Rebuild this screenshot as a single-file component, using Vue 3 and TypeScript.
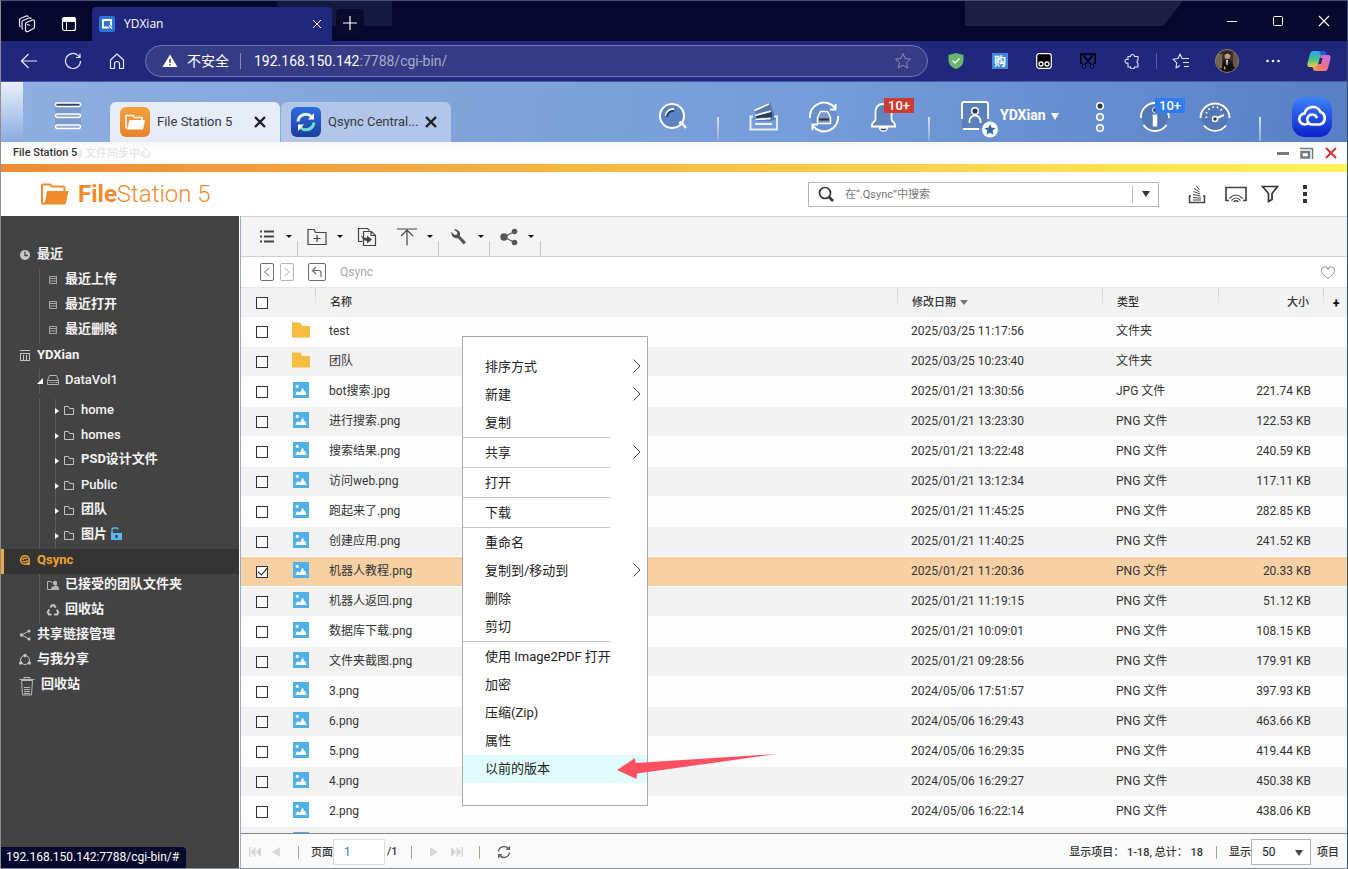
<script setup lang="ts">
import { ref } from 'vue'

interface FileRow {
  name: string
  date: string
  type: string
  size: string
  folder?: boolean
  checked?: boolean
}

interface TreeNode {
  label: string
  icon: string
  level: number
  arrow?: 'open' | 'closed'
  active?: boolean
  lock?: boolean
  gap?: boolean
  wide?: boolean
}

interface MenuItem {
  label: string
  sub?: boolean
  line?: boolean
  active?: boolean
}

const tree: TreeNode[] = [
  { label: '最近', icon: 'clock', level: 0 },
  { label: '最近上传', icon: 'list', level: 1 },
  { label: '最近打开', icon: 'list', level: 1 },
  { label: '最近删除', icon: 'list', level: 1 },
  { label: 'YDXian', icon: 'nas', level: 0 },
  { label: 'DataVol1', icon: 'disk', level: 1, arrow: 'open' },
  { label: 'home', icon: 'dir', level: 2, arrow: 'closed', gap: true },
  { label: 'homes', icon: 'dir', level: 2, arrow: 'closed' },
  { label: 'PSD设计文件', icon: 'dir', level: 2, arrow: 'closed' },
  { label: 'Public', icon: 'dir', level: 2, arrow: 'closed' },
  { label: '团队', icon: 'dir', level: 2, arrow: 'closed' },
  { label: '图片', icon: 'dir', level: 2, arrow: 'closed', lock: true },
  { label: 'Qsync', icon: 'qsync', level: 0, active: true },
  { label: '已接受的团队文件夹', icon: 'team', level: 1 },
  { label: '回收站', icon: 'recycle', level: 1 },
  { label: '共享链接管理', icon: 'link', level: 0 },
  { label: '与我分享', icon: 'circle', level: 0 },
  { label: '回收站', icon: 'trash', level: 0, wide: true },
]

// Han labels are set bold at every level; Latin ones only at the top level
const isHan = (label: string): boolean => /[\u4e00-\u9fff]/.test(label)

const files = ref<FileRow[]>([
  { name: 'test', date: '2025/03/25 11:17:56', type: '文件夹', size: '', folder: true },
  { name: '团队', date: '2025/03/25 10:23:40', type: '文件夹', size: '', folder: true },
  { name: 'bot搜索.jpg', date: '2025/01/21 13:30:56', type: 'JPG 文件', size: '221.74 KB' },
  { name: '进行搜索.png', date: '2025/01/21 13:23:30', type: 'PNG 文件', size: '122.53 KB' },
  { name: '搜索结果.png', date: '2025/01/21 13:22:48', type: 'PNG 文件', size: '240.59 KB' },
  { name: '访问web.png', date: '2025/01/21 13:12:34', type: 'PNG 文件', size: '117.11 KB' },
  { name: '跑起来了.png', date: '2025/01/21 11:45:25', type: 'PNG 文件', size: '282.85 KB' },
  { name: '创建应用.png', date: '2025/01/21 11:40:25', type: 'PNG 文件', size: '241.52 KB' },
  { name: '机器人教程.png', date: '2025/01/21 11:20:36', type: 'PNG 文件', size: '20.33 KB', checked: true },
  { name: '机器人返回.png', date: '2025/01/21 11:19:15', type: 'PNG 文件', size: '51.12 KB' },
  { name: '数据库下载.png', date: '2025/01/21 10:09:01', type: 'PNG 文件', size: '108.15 KB' },
  { name: '文件夹截图.png', date: '2025/01/21 09:28:56', type: 'PNG 文件', size: '179.91 KB' },
  { name: '3.png', date: '2024/05/06 17:51:57', type: 'PNG 文件', size: '397.93 KB' },
  { name: '6.png', date: '2024/05/06 16:29:43', type: 'PNG 文件', size: '463.66 KB' },
  { name: '5.png', date: '2024/05/06 16:29:35', type: 'PNG 文件', size: '419.44 KB' },
  { name: '4.png', date: '2024/05/06 16:29:27', type: 'PNG 文件', size: '450.38 KB' },
  { name: '2.png', date: '2024/05/06 16:22:14', type: 'PNG 文件', size: '438.06 KB' },
  { name: '', date: '', type: '', size: '' },
])

const menu: MenuItem[] = [
  { label: '排序方式', sub: true },
  { label: '新建', sub: true },
  { label: '复制', line: true },
  { label: '共享', sub: true, line: true },
  { label: '打开', line: true },
  { label: '下载', line: true },
  { label: '重命名' },
  { label: '复制到/移动到', sub: true },
  { label: '删除' },
  { label: '剪切', line: true },
  { label: '使用 Image2PDF 打开' },
  { label: '加密' },
  { label: '压缩(Zip)' },
  { label: '属性' },
  { label: '以前的版本', active: true },
]

const page = ref('1')
const perPage = ref('50')
const query = ref('')
</script>

<template>
  <div class="window">
    <svg class="defs" aria-hidden="true">
      <symbol id="clock" viewBox="0 0 16 16"><circle cx="8" cy="8" r="5" fill="#c9c9c9" /><path d="M8 4.5V8.5H11" fill="none" stroke="#434343" stroke-width="1.3" /></symbol>
      <symbol id="list" viewBox="0 0 16 16"><path d="M4.5 4.5h7v7h-7zM5 6.5h6M5 9h6" fill="none" stroke="#a6a6a6" /></symbol>
      <symbol id="nas" viewBox="0 0 16 16"><path d="M3 3.5h10M3.5 6v7M12.5 6v7M3 6.5h10M6.5 8v5M9.5 8v5M3 13.5h10" fill="none" stroke="#c4c4c4" /></symbol>
      <symbol id="disk" viewBox="0 0 16 16"><path d="M2.5 8.5l2-5h7l2 5v4h-11zM2.5 8.5h11" fill="none" stroke="#b5b5b5" stroke-linejoin="round" /><path d="M4.5 10.5h5" stroke="#b5b5b5" stroke-dasharray="1 1" /><path d="M10.5 10.5h2" stroke="#b5b5b5" /></symbol>
      <symbol id="dir" viewBox="0 0 16 16"><path d="M3.5 12.5v-8h4l1 2h4v6z" fill="none" stroke="#c4c4c4" /></symbol>
      <symbol id="qsync" viewBox="0 0 16 16"><circle cx="8" cy="8" r="4.300" fill="none" stroke="#f0a030" stroke-width="1.600" /><path d="M5.500 8q1-2.500 3.500-1.500l1.500-.5M10.500 8q-1 2.500-3.500 1.500l-1.500.5" fill="none" stroke="#f0a030" stroke-width="1.300" /><path d="M10.500 10.500h2.500V13H9z" fill="#f0a030" /></symbol>
      <symbol id="team" viewBox="0 0 16 16"><path d="M8 12.500H2.500V4.500H6l1 1.500" fill="none" stroke="#b5b5b5" /><circle cx="10" cy="6" r="2.200" fill="#b5b5b5" /><path d="M6 13c0-3 1.500-4 4-4V5h1.500v4C13.500 9 14 10.500 14 13z" fill="#b5b5b5" /></symbol>
      <symbol id="recycle" viewBox="0 0 16 16"><path d="M5.500 5.500L7 3.200h2.200l1.500 2.500M11.800 7.800l1.500 2.600-1.200 2.100H9M6.500 12.500H4L2.700 10.300 4.200 7.600" fill="none" stroke="#c4c4c4" stroke-width="2" /></symbol>
      <symbol id="link" viewBox="0 0 16 16"><path d="M12 4L4.500 8l7.500 4" fill="none" stroke="#c4c4c4" /><circle cx="12" cy="4" r="1.500" fill="#c4c4c4" /><circle cx="4.500" cy="8" r="1.700" fill="#c4c4c4" /><circle cx="12" cy="12" r="1.500" fill="#c4c4c4" /></symbol>
      <symbol id="circle" viewBox="0 0 16 16"><circle cx="8" cy="8" r="4.500" fill="none" stroke="#c4c4c4" /><circle cx="8" cy="3.500" r="1.700" fill="#c4c4c4" /><circle cx="3.700" cy="11" r="1.700" fill="#c4c4c4" /><circle cx="12.300" cy="11" r="1.700" fill="#c4c4c4" /></symbol>
      <symbol id="trash" viewBox="0 0 16 20"><path d="M.5 3.500h15M5 3V1.500h6V3M2.500 4.500l1 14.500h9l1-14.500z" fill="none" stroke="#b9b9b9" /><path d="M5 11.500h6M5 13.500h6M5 15.500h6M5 17.500h6" stroke="#b9b9b9" /></symbol>
    </svg>

    <header class="tabstrip">
      <svg class="strip-art" viewBox="0 0 1348 40" width="1348" height="40" aria-hidden="true">
        <path d="M275 0h116v25h-108z" fill="#171a40" /><path d="M964 0h318l-20 25H964z" fill="#1d1f43" transform="translate(0 0)" opacity="0" /><path d="M964 0h218l-20 25H964z" fill="#1d1f43" />
      </svg>
      <button class="strip-btn" aria-label="工作区">
        <svg width="18" height="18" viewBox="0 0 18 18" fill="none" stroke="#eef" stroke-width="1.200" stroke-linejoin="round" stroke-linecap="round"><path d="M7.500 9q0-1 1-1.500l6-2.500q2-.5 2 1.500v5.500q0 1-1 1.500l-5.500 3q-2.500.5-2.500-1.500z" /><path d="M9.500 9.500l2 .8M4.500 14q-.5-.5-.5-1.500V7q0-1 1-1.500L11 3q1-.5 2 .3M2 11.500q-.5-.5-.5-1.500V5q0-1 1-1.500L8 1q1-.5 2 .3" /></svg>
      </button>
      <button class="strip-btn" aria-label="标签页操作">
        <svg width="16" height="16" viewBox="0 0 16 16"><rect x="1.500" y="1.500" width="13" height="13" rx="2" fill="none" stroke="#fff" stroke-width="1.200" /><path d="M2 2h12v3.500H2zM5.500 5v9" fill="#fff" stroke="#fff" /></svg>
      </button>
      <div class="tab">
        <svg width="16" height="16" viewBox="0 0 16 16"><rect width="16" height="16" rx="2" fill="#2f72d8" /><path d="M4 4h8v7.500H4z" fill="none" stroke="#fff" stroke-width="2" /><path d="M9.500 9l3.500 4" stroke="#2f72d8" stroke-width="3" /><path d="M10 9.500l3 3" stroke="#fff" stroke-width="1.200" /></svg>
        <span>YDXian</span>
        <button class="tab-close" aria-label="关闭标签页"><svg width="10" height="10" viewBox="0 0 10 10"><path d="M1 1l8 8M9 1l-8 8" stroke="#fff" /></svg></button>
      </div>
      <button class="new-tab" aria-label="新建标签页"><svg width="14" height="14" viewBox="0 0 14 14"><path d="M7 0v14M0 7h14" stroke="#fff" stroke-width="1.200" /></svg></button>
      <div class="win-btns">
        <button aria-label="最小化"><svg width="12" height="12" viewBox="0 0 12 12"><path d="M1 6.500h10" stroke="#fff" /></svg></button>
        <button aria-label="最大化"><svg width="12" height="12" viewBox="0 0 12 12"><rect x="1.500" y="1.500" width="9" height="9" rx="1" fill="none" stroke="#fff" /></svg></button>
        <button aria-label="关闭"><svg width="12" height="12" viewBox="0 0 12 12"><path d="M1 1l10 10M11 1L1 11" stroke="#fff" stroke-width="1.100" /></svg></button>
      </div>
    </header>

    <nav class="toolbar" aria-label="浏览器">
      <button class="nav-btn" aria-label="后退"><svg width="18" height="18" viewBox="0 0 18 18" fill="none" stroke="#e6e8f8" stroke-width="1.200"><path d="M8.500 2L1.500 9l7 7M1.500 9H17" /></svg></button>
      <button class="nav-btn" aria-label="刷新"><svg width="18" height="18" viewBox="0 0 18 18" fill="none" stroke="#e6e8f8" stroke-width="1.200"><path d="M16.500 9A7.500 7.500 0 1 1 14 3.400L16 5.500M16 1.500v4h-4" /></svg></button>
      <button class="nav-btn" aria-label="主页"><svg width="18" height="18" viewBox="0 0 18 18" fill="none" stroke="#e6e8f8" stroke-width="1.200" stroke-linejoin="round"><path d="M2.500 8L9 2l6.500 6v8.500H11.500V12a2.500 2.500 0 0 0-5 0v4.500h-4z" /></svg></button>
      <div class="url">
        <svg width="16" height="14" viewBox="0 0 16 14"><path d="M8 0.500L15.500 13H.5z" fill="#fff" /><path d="M8 5v4M8 10v1.500" stroke="#363b86" stroke-width="1.500" /></svg>
        <span class="unsafe">不安全</span>
        <i class="bar"></i>
        <span class="addr">192.168.150.142<em>:7788/cgi-bin/</em></span>
        <button class="star" aria-label="收藏"><svg width="18" height="18" viewBox="0 0 18 18"><path d="M9 1.500l2.200 5 5.300.6-4 3.600 1.200 5.300L9 13.200 4.300 16l1.200-5.300-4-3.600 5.300-.6z" fill="none" stroke="#8d90ad" stroke-linejoin="round" /></svg></button>
      </div>
      <div class="exts">
        <button aria-label="安全防护"><svg width="16" height="16" viewBox="0 0 16 16"><path d="M8 0l7.500 2v5c0 5-3.500 7.500-7.500 9C4 14.500.5 12 .5 7V2z" fill="#68b56b" /><path d="M4.500 7.500L7 10l4.500-4.500" fill="none" stroke="#fff" stroke-width="1.300" /></svg></button>
        <button class="buy"><span>购</span></button>
        <button aria-label="脚本"><svg width="16" height="16" viewBox="0 0 16 16"><rect x=".7" y=".7" width="14.600" height="14.600" rx="2.500" fill="#000" stroke="#fff" stroke-width="1.200" /><circle cx="5" cy="11" r="2" fill="none" stroke="#fff" stroke-width="1.300" /><circle cx="11" cy="11" r="2" fill="none" stroke="#fff" stroke-width="1.300" /></svg></button>
        <button aria-label="截图"><svg width="16" height="16" viewBox="0 0 16 16" fill="none" stroke="#000" stroke-width="1.500"><path d="M.8 10V1h14.400v9M2.500 10.500h-2M15.500 10.500h-2M3.500 2.500l7.500 9M12.500 2.500l-7.500 9" /><circle cx="4" cy="13.500" r="1.500" fill="#2e7fe0" stroke-width="1.200" /><circle cx="12" cy="13.500" r="1.500" fill="#2e7fe0" stroke-width="1.200" /></svg></button>
        <button aria-label="扩展"><svg width="16" height="16" viewBox="0 0 16 16"><path d="M4 3.500h2.500a2 2 0 0 1 4 0H14V7a2 2 0 0 0 0 3.500V14h-3.500a2 2 0 0 1-4 0H4v-4a2 2 0 1 1 0-3.500z" fill="none" stroke="#e6e8f8" stroke-width="1.100" stroke-linejoin="round" /></svg></button>
      </div>
      <i class="bar2"></i>
      <div class="exts wide">
        <button aria-label="收藏夹"><svg width="18" height="18" viewBox="0 0 18 18" fill="none" stroke="#e6e8f8" stroke-width="1.100" stroke-linejoin="round"><path d="M10 6.500L8 2 6 6.500l-5 .7 3.700 3.600L4 16l4-2.500M10 6.500h7M11 10.500h6M12 14.500h5" /></svg></button>
        <button aria-label="个人资料"><svg width="24" height="24" viewBox="0 0 24 24"><circle cx="12" cy="12" r="12" fill="#372d2a" /><path d="M3 5h4v14H4A12 12 0 0 1 3 5z" fill="#7a6552" /><path d="M18 4h2a12 12 0 0 1 2 14h-4z" fill="#6b5646" /><circle cx="12.500" cy="7" r="3" fill="#c49a80" /><path d="M9.500 6a3 3 0 0 1 6 0l-3-2z" fill="#111" /><path d="M7 23c0-9 1-12 5-12s7 3 7 11a12 12 0 0 1-12 1z" fill="#111116" /><path d="M11 11h2l-.5 5h-1z" fill="#ddd" /><path d="M9 17l2 2-2 2z" fill="#c49a80" /><circle cx="12" cy="12" r="11.500" fill="none" stroke="#8a8493" /></svg></button>
        <button aria-label="更多"><svg width="16" height="4" viewBox="0 0 16 4" fill="#fff"><circle cx="2.500" cy="2" r="1.300" /><circle cx="8" cy="2" r="1.300" /><circle cx="13.500" cy="2" r="1.300" /></svg></button>
        <button aria-label="Copilot"><svg width="24" height="22" viewBox="0 0 24 22">
          <defs>
            <linearGradient id="cpA" x1="0" y1="0" x2="0" y2="1"><stop offset="0" stop-color="#2aa5ee" /><stop offset=".55" stop-color="#4cc38a" /><stop offset="1" stop-color="#f2d13c" /></linearGradient>
            <linearGradient id="cpB" x1="1" y1="0" x2="0" y2="1"><stop offset="0" stop-color="#c06ff0" /><stop offset=".55" stop-color="#f0708a" /><stop offset="1" stop-color="#f59a45" /></linearGradient>
          </defs>
          <path d="M6 1h10c2 0 2.500 1.500 3 4h-3c-2 0-2.500 1-3 3l-1.500 6c-.5 2-1.500 3-3 3H3c-2.500 0-3-2-2.300-4.500L3 4C3.500 2 4.500 1 6 1z" fill="url(#cpA)" /><path d="M12 1h4c2 0 2.500 1.500 3 4h-5z" fill="#2857d8" /><path d="M18 21H8.500C6.500 21 6 19 5.500 17H8c2 0 3-1 3.500-3L13 8c.5-2 1.500-3 3-3h5c2.500 0 3 2 2.300 4.500L21 18c-.5 2-1.500 3-3 3z" fill="url(#cpB)" /><path d="M12.800 8h2.700L14 14h-2.700z" fill="#20277d" />
        </svg></button>
      </div>
    </nav>

    <div class="desk">
      <div class="desk-edge"></div>
      <button class="burger" aria-label="主菜单">
        <svg width="28" height="28" viewBox="0 0 28 28"><path d="M1 3h26v22H1z" fill="#526fa3" opacity=".3" /><g fill="#8ea9d6" stroke="#fff" stroke-width="1.500"><rect x="1.500" y="1" width="25" height="3.500" rx="1.700" fill="#32475f" /><rect x="1.500" y="12" width="25" height="3.500" rx="1.700" /><rect x="1.500" y="23" width="25" height="3.500" rx="1.700" /></g></svg>
      </button>
      <div class="app-tab on">
        <svg width="30" height="30" viewBox="0 0 30 30"><defs><linearGradient id="og" x1="0" y1="0" x2="0" y2="1"><stop offset="0" stop-color="#f5a13a" /><stop offset="1" stop-color="#e8822e" /></linearGradient></defs><rect width="30" height="30" rx="6" fill="url(#og)" /><path d="M6 21.500V8.500h7l1.500 2H22v3" fill="none" stroke="#fff" stroke-width="1.500" stroke-linejoin="round" /><path d="M9.500 13H25l-2 9.500H7z" fill="#fff" /></svg>
        <span>File Station 5</span>
        <button aria-label="关闭 File Station"><svg width="12" height="12" viewBox="0 0 12 12"><path d="M1 1l10 10M11 1L1 11" stroke="#1c1e22" stroke-width="2.400" /></svg></button>
      </div>
      <div class="app-tab">
        <svg width="30" height="30" viewBox="0 0 30 30"><defs><linearGradient id="bg1" x1="0" y1="0" x2="0" y2="1"><stop offset="0" stop-color="#2e6be0" /><stop offset="1" stop-color="#1c3d9c" /></linearGradient></defs><rect width="30" height="30" rx="6" fill="url(#bg1)" /><path d="M7 14.500a8 8 0 0 1 13.500-5" fill="none" stroke="#e8f0ff" stroke-width="3" /><path d="M23 6v6.500h-6z" fill="#fff" /><path d="M23 15.500a8 8 0 0 1-13.500 5" fill="none" stroke="#6fdcd0" stroke-width="3" /><path d="M7 24v-6.500h6z" fill="#fff" /></svg>
        <span>Qsync Central...</span>
        <button aria-label="关闭 Qsync Central"><svg width="12" height="12" viewBox="0 0 12 12"><path d="M1 1l10 10M11 1L1 11" stroke="#1c1e22" stroke-width="2.400" /></svg></button>
      </div>

      <div class="desk-right">
        <button class="cell" aria-label="搜索"><svg width="32" height="32" viewBox="0 0 32 32"><circle cx="15" cy="15" r="12" fill="#5c83c3" stroke="#fff" stroke-width="2" /><path d="M9 15a7 7 0 0 1 8-7" fill="none" stroke="#fff" stroke-width="2" /><path d="M10 16a6 6 0 0 1 7-6" fill="none" stroke="#263a59" stroke-width="2" /><path d="M22 22l2-1 5 6" fill="none" stroke="#fff" stroke-width="2.200" /></svg></button>
        <i class="split"></i>
        <button class="cell" aria-label="后台任务"><svg width="32" height="32" viewBox="0 0 32 32"><path d="M7 8l15-6 6 16-5 2H8z" fill="#5878ad" /><path d="M8 15l16-4v5l-16 1z" fill="#2a3c55" /><path d="M6.500 9.500L21 3M7 14.500l16-4.500M7.500 18.500l15-1" fill="none" stroke="#fff" stroke-width="1.700" /><path d="M7 23h17" stroke="#fff" stroke-width="1.700" /><path d="M5 15.500H2.500v13h26.500v-13H26" fill="none" stroke="#e6edf9" stroke-width="2" /></svg></button>
        <button class="cell" aria-label="外接设备"><svg width="32" height="32" viewBox="0 0 32 32"><circle cx="16" cy="16" r="13" fill="#5c83c3" opacity=".5" /><path d="M2 17A14 14 0 0 1 27 7M30 15A14 14 0 0 1 5 25" fill="none" stroke="#fff" stroke-width="2" /><path d="M27.500 3v5.500H22M4.500 29v-5.500H10" fill="none" stroke="#fff" stroke-width="2" /><path d="M9.500 16.500l3-6h7l3 6v6h-13z" fill="#8098c4" stroke="#fff" stroke-width="1.500" /><path d="M11 18.500h10" stroke="#1f3048" stroke-width="2" /></svg></button>
        <button class="cell" aria-label="通知"><svg width="32" height="32" viewBox="0 0 32 32"><path d="M15 3c-6 0-7.500 4.500-7.500 9v6c0 3-3.500 3-3.500 6v1.500h23V24c0-3-3.500-3-3.500-6v-6c0-5-2-9-8.500-9z" fill="#6385bf" stroke="#fff" stroke-width="1.800" /><path d="M11.500 27a4 3 0 0 0 8 0z" fill="#2a3c55" stroke="#fff" stroke-width="1.300" /></svg><b class="badge red">10+</b></button>
        <i class="split"></i>
        <button class="user">
          <svg width="38" height="38" viewBox="0 0 38 38"><path d="M2 4q0-2 2-2h22q2 0 2 2v24H2z" fill="#5c80bb" /><path d="M2 19V4q0-2 2-2h22q2 0 2 2v15" fill="none" stroke="#fff" stroke-width="1.800" /><circle cx="15" cy="11" r="3.300" fill="#253852" stroke="#fff" stroke-width="1.500" /><path d="M9.500 23v-2a5.500 5.500 0 0 1 11 0v2" fill="none" stroke="#fff" stroke-width="1.800" /><path d="M3 29h16" stroke="#fff" stroke-width="2" /><circle cx="30" cy="29.500" r="8" fill="#fff" /><path d="M30 24l1.600 3.700 4 .4-3 2.700.9 4L30 32.700l-3.500 2.100.9-4-3-2.700 4-.4z" fill="#3667a8" /></svg>
          <span>YDXian</span>
          <svg class="tri" width="8" height="7" viewBox="0 0 8 7"><path d="M0 0h8L4 7z" fill="#fff" /></svg>
        </button>
        <button class="cell dots" aria-label="更多"><svg width="12" height="32" viewBox="0 0 12 32" fill="#7a98cc" stroke="#fff" stroke-width="1.500"><circle cx="6" cy="5" r="3.300" fill="#263a50" /><circle cx="6" cy="16" r="3.300" /><circle cx="6" cy="27" r="3.300" /></svg></button>
        <button class="cell" aria-label="信息"><svg width="32" height="32" viewBox="0 0 32 32"><circle cx="16" cy="16" r="13" fill="#5378b5" /><path d="M2 17A14 14 0 0 1 16 2M30 17a14 14 0 0 0-1-5M4.500 24a14 14 0 0 0 23 0" fill="none" stroke="#fff" stroke-width="1.800" /><circle cx="16" cy="9" r="2.500" fill="#253852" stroke="#fff" /><path d="M16 13.500v12" stroke="#fff" stroke-width="4.500" /></svg><b class="badge blue">10+</b></button>
        <button class="cell" aria-label="资源监控"><svg width="32" height="32" viewBox="0 0 32 32"><circle cx="16" cy="16" r="13" fill="#5378b5" /><path d="M1.500 17A14.500 14.500 0 0 1 30.500 17M5 24.500a14 14 0 0 0 22 0" fill="none" stroke="#fff" stroke-width="1.800" /><path d="M7.500 17A8.500 8.500 0 0 1 24 12" fill="none" stroke="#fff" stroke-width="2" stroke-dasharray="1.500 3" /><circle cx="16" cy="18" r="2.500" fill="#253852" stroke="#fff" stroke-width="1.500" /><path d="M18 17l7-3" stroke="#fff" stroke-width="2" /></svg></button>
        <i class="split"></i>
        <button class="cloud" aria-label="myQNAPcloud"><svg width="40" height="40" viewBox="0 0 40 40"><defs><linearGradient id="cl" x1="0" y1="0" x2="0" y2="1"><stop offset="0" stop-color="#3b83f7" /><stop offset="1" stop-color="#0d20cc" /></linearGradient></defs><rect width="40" height="40" rx="13" fill="url(#cl)" /><path d="M13 27.500a5.500 5.500 0 0 1-.5-11 8.500 8.500 0 0 1 16-1.500 6.500 6.500 0 0 1-1 12.500H20a5 5 0 1 1 4.500-7.500M13 27.500c2 0 3-1 3.500-2" fill="none" stroke="#fff" stroke-width="2.700" stroke-linecap="round" /></svg></button>
      </div>
    </div>

    <div class="titlebar">
      <span class="title">File Station 5</span><span class="ghost">l 文件同步中心</span>
      <div class="title-btns">
        <button aria-label="最小化窗口"><svg width="14" height="14" viewBox="0 0 14 14"><path d="M1 7.500h12" stroke="#747b84" stroke-width="3" /></svg></button>
        <button aria-label="还原窗口"><svg width="14" height="14" viewBox="0 0 14 14"><path d="M0 2.500h12.500V13" fill="none" stroke="#747b84" stroke-width="1.500" /><path d="M1.500 6h7.500v5.500H1.500z" fill="none" stroke="#747b84" stroke-width="2.500" /></svg></button>
        <button aria-label="关闭窗口"><svg width="12" height="12" viewBox="0 0 12 12"><path d="M1 1l10 10M11 1L1 11" stroke="#d9352b" stroke-width="2" /></svg></button>
      </div>
    </div>
    <div class="rainbow"></div>

    <div class="brand">
      <svg class="brand-icon" width="30" height="22" viewBox="0 0 30 22"><path d="M3 19.500V2.500Q3 1.500 4 1.500h7l2 2h11q1.500 0 1.500 1.500v3" fill="none" stroke="#f08b2d" stroke-width="2" /><path d="M8 8h21.500L27 20q-.4 1.500-2 1.500H4q-1.500 0-2-1.500l4-1z" fill="#f08b2d" /></svg>
      <h1><b>File</b>Station 5</h1>
      <div class="search">
        <svg width="16" height="16" viewBox="0 0 16 16"><circle cx="7" cy="7" r="5.500" fill="none" stroke="#333" stroke-width="1.700" /><path d="M11 11l4 4" stroke="#333" stroke-width="2.500" /></svg>
        <input v-model="query" type="search" placeholder="在“.Qsync”中搜索" aria-label="搜索文件" />
        <button aria-label="搜索选项"><svg width="8" height="6" viewBox="0 0 8 6"><path d="M0 0h8L4 6z" fill="#333" /></svg></button>
      </div>
      <button class="head-btn h1b" aria-label="任务"><svg width="18" height="20" viewBox="0 0 18 20" fill="none" stroke="#444"><path d="M3 12H1.500v6.500h15V12H15" stroke-width="1.500" /><path d="M5 16h8M5 13.500l8 .7M5 10.500l7.500 1.500M5.500 7.500l6.500 2.500M6 4.500l5.500 3.500M8.500 2l3 4" /></svg></button>
      <button class="head-btn h2b" aria-label="投屏"><svg width="22" height="18" viewBox="0 0 22 18" fill="none" stroke="#444"><path d="M4 15.500H1V2.500h20v13h-3" stroke-width="1.700" /><path d="M4.500 13.500q6.500-7 13 0M6.500 15.500q4.500-5 9 0M8.500 17q2.500-2.500 5 0" stroke-width="1.200" /></svg></button>
      <button class="head-btn h3b" aria-label="筛选"><svg width="18" height="18" viewBox="0 0 18 18"><path d="M1.500 1.500h15L11 8.500v6l-3.500 2v-8z" fill="none" stroke="#333" stroke-width="1.700" /></svg></button>
      <button class="head-btn h4b" aria-label="更多选项"><svg width="4" height="20" viewBox="0 0 4 20" fill="#333"><path d="M0 1h4v4H0zM0 8h4v4H0zM0 15h4v4H0z" /></svg></button>
    </div>

    <div class="body">
      <aside class="side">
        <ul>
          <li v-for="(n, i) in tree" :key="i" :class="['l' + n.level, { active: n.active, gap: n.gap, deep: n.wide, han: isHan(n.label) }]">
            <i v-if="n.level > 0" class="guide"></i>
            <i v-if="n.level > 1" class="guide two"></i>
            <svg v-if="n.arrow === 'open'" class="tw" width="6" height="6" viewBox="0 0 6 6"><path d="M6 0v6H0z" fill="#fff" /></svg>
            <svg v-if="n.arrow === 'closed'" class="tw" width="6" height="6" viewBox="0 0 6 6"><path d="M1 0l4 3-4 3z" fill="#fff" /></svg>
            <svg class="ico"><use :href="'#' + n.icon" /></svg>
            <a href="#">{{ n.label }}</a>
            <svg v-if="n.lock" class="lock" width="12" height="14" viewBox="0 0 12 14"><path d="M1 6V2.500Q1 1 2.500 1h3Q7 1 7 2.500" fill="none" stroke="#5bb8f2" stroke-width="1.500" /><rect y="6" width="11" height="7" fill="#5bb8f2" /><path d="M5.500 8v3" stroke="#234" stroke-width="2" /></svg>
          </li>
        </ul>
      </aside>

      <main class="panel">
        <div class="tools">
          <div class="grp t1">
            <button aria-label="视图"><svg width="16" height="14" viewBox="0 0 16 14"><path d="M5 1.500h10M5 6.500h10M5 11.500h10" stroke="#444" stroke-width="2" /><path d="M1 1.500h2M1 6.500h2M1 11.500h2" stroke="#444" stroke-width="2" /></svg></button><i class="dn"></i>
          </div>
          <div class="grp t2">
            <button aria-label="新建文件夹"><svg width="20" height="18" viewBox="0 0 20 18" fill="none" stroke="#444" stroke-width="1.200"><path d="M1 16.500V1.500h6l1.500 3H19v12zM10 7v7M6.500 10.500h7" /></svg></button><i class="dn"></i>
            <button class="copy" aria-label="复制"><svg width="20" height="20" viewBox="0 0 20 20" fill="none" stroke="#444" stroke-width="1.200"><path d="M5.500 14.500H1.500v-13h9l2 2M6.500 4.500h8l4 4v10h-12zM14 4.500v4h4" /><path d="M4 8q2 3 6 3V8.500l5 4-5 4V14Q5 13.500 4 8z" fill="#444" stroke="none" /></svg></button>
            <button class="up" aria-label="上传"><svg width="20" height="18" viewBox="0 0 20 18" fill="none" stroke="#444" stroke-width="1.200"><path d="M0 1h20M10 17.500V2M4 8l6-6 6 6" /></svg></button><i class="dn"></i>
          </div>
          <div class="grp t3">
            <button aria-label="工具"><svg width="18" height="18" viewBox="0 0 18 18"><path d="M3.500 1.500a5 5 0 0 1 6.300 6.300l6.200 6.400-2.300 2.300-6-6.500A5 5 0 0 1 1.500 4L4.500 7l2.500-.5L7.200 4z" fill="#555" /></svg></button><i class="dn"></i>
          </div>
          <div class="grp t4">
            <button aria-label="共享"><svg width="18" height="18" viewBox="0 0 18 18"><path d="M14.500 3.500L4 9l10.500 5.500" fill="none" stroke="#555" stroke-width="1.200" /><circle cx="14.500" cy="3.500" r="2.800" fill="#555" /><circle cx="4" cy="9" r="3.700" fill="#555" /><circle cx="14.500" cy="14.500" r="2.800" fill="#555" /></svg></button><i class="dn"></i>
          </div>
        </div>

        <div class="crumb">
          <button class="cb" aria-label="上一个"><svg width="14" height="18" viewBox="0 0 14 18" fill="none" stroke="#6a6a6a"><rect x=".5" y=".5" width="13" height="17" rx="1.500" /><path d="M9.500 5l-5 4 5 4" /></svg></button>
          <button class="cb dim" aria-label="下一个"><svg width="14" height="18" viewBox="0 0 14 18" fill="none" stroke="#b5b5b5"><rect x=".5" y=".5" width="13" height="17" rx="1.500" /><path d="M4.500 5l5 4-5 4" /></svg></button>
          <button class="cb back" aria-label="返回上级"><svg width="18" height="18" viewBox="0 0 18 18" fill="none" stroke="#6a6a6a"><rect x=".5" y=".5" width="17" height="17" rx="1.500" /><path d="M8 4L4.500 7.500 8 11M4.500 7.500H11q2 0 2 2V14" stroke-width="1.200" /></svg></button>
          <span>Qsync</span>
          <button class="heart" aria-label="添加到收藏夹"><svg width="14" height="14" viewBox="0 0 14 14"><path d="M7 12.500C2.500 9 .5 7 .5 4.500a3.200 3.200 0 0 1 6.500-1 3.200 3.200 0 0 1 6.500 1C13.500 7 11.500 9 7 12.500z" fill="none" stroke="#8d8d8d" /></svg></button>
        </div>

        <div class="grid">
          <table>
            <colgroup><col class="c1" /><col class="c2" /><col /><col class="c4" /><col class="c5" /><col class="c6" /><col class="c7" /></colgroup>
            <thead>
              <tr>
                <th class="chk"><input type="checkbox" aria-label="全选" /></th>
                <th class="sep"></th>
                <th class="name sep">名称</th>
                <th class="pad sep">修改日期<svg width="8" height="5" viewBox="0 0 8 5"><path d="M0 0h8L4 5z" fill="#777" /></svg></th>
                <th class="pad sep">类型</th>
                <th class="num sep">大小</th>
                <th class="plus"><button aria-label="添加列">+</button></th>
              </tr>
            </thead>
            <tbody>
              <tr v-for="(f, i) in files" :key="i" :class="{ sel: f.checked }">
                <td class="chk"><input v-model="f.checked" type="checkbox" :aria-label="f.name" /></td>
                <td class="fi">
                  <svg v-if="f.folder" class="dir-ico" width="20" height="16" viewBox="0 0 20 16"><path d="M1 0h8l2 4h8v12H1z" fill="#f7bd43" /><path d="M1 .5h8M1 15.500h18" stroke="#f9d791" /></svg>
                  <svg v-else width="16" height="16" viewBox="0 0 16 16"><rect width="16" height="16" fill="#50b1e9" /><circle cx="4.300" cy="4.300" r="1.600" fill="#fff" /><path d="M2.500 13c.5-2 1.500-3.500 2.500-3.500s1.200 1 2 1c1 0 1.500-4.500 2.500-4.500s1.200 3 2 3 1.500 1.500 2 4z" fill="#fff" /></svg>
                </td>
                <td class="name">{{ f.name }}</td>
                <td class="pad">{{ f.date }}</td>
                <td class="pad">{{ f.type }}</td>
                <td class="num">{{ f.size }}</td>
                <td></td>
              </tr>
            </tbody>
          </table>
        </div>

        <footer class="pager">
          <button class="p1" aria-label="首页"><svg width="12" height="10" viewBox="0 0 12 10" fill="#d4d4d4"><path d="M0 0h1.500v10H0zM6.500 0v10L1.500 5zM12 0v10L7 5z" /></svg></button>
          <button class="p2" aria-label="上一页"><svg width="8" height="10" viewBox="0 0 8 10"><path d="M8 0v10L0 5z" fill="#d9d9d9" /></svg></button>
          <i class="ps"></i>
          <label for="page">页面</label><input id="page" v-model="page" type="text" /><span class="of">/1</span>
          <i class="ps s2"></i>
          <button class="p3" aria-label="下一页"><svg width="8" height="10" viewBox="0 0 8 10"><path d="M0 0v10l8-5z" fill="#d9d9d9" /></svg></button>
          <button class="p4" aria-label="末页"><svg width="12" height="10" viewBox="0 0 12 10" fill="#d4d4d4"><path d="M10.500 0H12v10h-1.500zM5.500 0v10l5-5zM0 0v10l5-5z" /></svg></button>
          <i class="ps s3"></i>
          <button class="p5" aria-label="刷新"><svg width="14" height="14" viewBox="0 0 14 14" fill="none" stroke="#666" stroke-width="1.500"><path d="M1.500 6.500a5.500 5.500 0 0 1 10-2.500M12.500 7.500a5.500 5.500 0 0 1-10 2.500" /><path d="M13 .5V5H8.500zM1 13.500V9h4.500z" fill="#666" stroke="none" /></svg></button>
          <div class="sum">
            <span>显示项目： 1-18, 总计： 18</span>
            <i class="ps s4"></i>
            <label for="per">显示</label>
            <div class="sel-wrap">
              <select id="per" v-model="perPage"><option>50</option></select>
              <svg width="8" height="6" viewBox="0 0 8 6"><path d="M0 0h8L4 6z" fill="#444" /></svg>
            </div>
            <span class="unit">项目</span>
          </div>
        </footer>

        <div class="menu" role="menu">
          <button v-for="m in menu" :key="m.label" role="menuitem" :class="{ line: m.line, hot: m.active }">
            <span>{{ m.label }}</span>
            <svg v-if="m.sub" width="8" height="14" viewBox="0 0 8 14"><path d="M.5 .5L7 7 .5 13.500" fill="none" stroke="#444" /></svg>
          </button>
        </div>
        <svg class="pointer" width="160" height="26" viewBox="0 0 160 26" aria-hidden="true"><path d="M0 16L18 4l.5 5L160 0 20 19.500l-.5 5.500z" fill="#ff5062" /></svg>
      </main>
    </div>
    <div class="status">192.168.150.142:7788/cgi-bin/#</div>
  </div>
</template>

<style>
html,
body {
  margin: 0;
  height: 100%;
  overflow: hidden;
}
#app {
  height: 100%;
}
</style>

<style scoped>
* {
  box-sizing: border-box;
}
button {
  border: 0;
  padding: 0;
  background: none;
  font: inherit;
  color: inherit;
  display: flex;
  align-items: center;
  justify-content: center;
  flex: none;
}
svg {
  flex: none;
  display: block;
}
.defs {
  position: absolute;
  width: 0;
  height: 0;
}
.window {
  position: relative;
  height: 100vh;
  display: flex;
  flex-direction: column;
  border: 1px solid #8b8e95;
  border-top-color: #4a4f78;
  border-right-color: #34506f;
  background: #fff;
  font-family: Roboto, "Noto Sans CJK SC", sans-serif;
  color: #333;
  overflow: hidden;
}
.tabstrip {
  position: relative;
  height: 40px;
  flex: none;
  display: flex;
  align-items: flex-end;
  padding-left: 5px;
  background: #05072d;
}
.strip-art {
  position: absolute;
  left: 0;
  top: 0;
}
.strip-btn {
  position: relative;
  width: 42px;
  height: 34px;
}
.tab {
  position: relative;
  width: 240px;
  height: 34px;
  margin-left: 2px;
  padding: 0 10px 0 7px;
  display: flex;
  align-items: center;
  background: #20277d;
  border-radius: 4px 4px 0 0;
  color: #fff;
  font: 12px/16px "Open Sans", "Noto Sans CJK SC", sans-serif;
}
.tab span {
  margin-left: 9px;
  flex: 1;
}
.new-tab {
  position: relative;
  width: 28px;
  height: 28px;
  margin: 0 0 4px 4px;
  border-radius: 4px;
  background: #090a2b;
}
.win-btns {
  position: relative;
  margin-left: auto;
  height: 40px;
  display: flex;
}
.win-btns button {
  width: 46px;
}
.toolbar {
  height: 41px;
  flex: none;
  display: flex;
  align-items: center;
  padding: 0 5px 0 6px;
  background: #20277d;
  border-bottom: 1px solid #4b57a0;
}
.nav-btn {
  width: 44px;
  height: 32px;
}
.url {
  flex: 1;
  height: 32px;
  margin: 0 6px;
  padding: 0 15px 0 16px;
  display: flex;
  align-items: center;
  background: #363b86;
  border: 1px solid #7376ad;
  border-radius: 16px;
  color: #fff;
  font: 14px/20px Roboto, "Noto Sans CJK SC", sans-serif;
}
.unsafe {
  margin-left: 9px;
}
.bar {
  width: 1px;
  height: 16px;
  margin: 0 13px 0 11px;
  background: #8587b4;
}
.addr {
  flex: 1;
}
.addr em {
  font-style: normal;
  color: #a9acc8;
}
.exts {
  display: flex;
  align-items: center;
}
.exts button {
  width: 44px;
  height: 32px;
}
.exts.wide button {
  width: 46px;
}
.bar2 {
  width: 1px;
  height: 16px;
  margin: 0 1px 0 2px;
  background: #555ba5;
}
.buy span {
  width: 16px;
  height: 16px;
  background: #4288d8;
  color: #fff;
  font: 700 12px/16px "Noto Sans CJK SC", sans-serif;
  text-align: center;
}
.desk {
  height: 60px;
  flex: none;
  display: flex;
  align-items: flex-end;
  background: linear-gradient(98deg, #8fafe1 0%, #7fa3d8 35%, #759dda 60%, #577fc5 100%);
}
.desk-edge {
  width: 22px;
  height: 60px;
  background: linear-gradient(#e9f0fb, #8aaade);
}
.burger {
  width: 87px;
  height: 52px;
  padding-left: 2px;
}
.app-tab {
  width: 170px;
  height: 40px;
  margin-right: 1px;
  padding: 0 14px 0 10px;
  display: flex;
  align-items: center;
  background: #b1c6e9;
  border-radius: 6px 6px 0 0;
  color: #34373d;
  font-size: 13px;
}
.app-tab.on {
  background: #e7ecf6;
}
.app-tab span {
  flex: 1;
  margin: 0 0 2px 7px;
  white-space: nowrap;
}
.app-tab button {
  flex: none;
}
.desk-right {
  margin-left: auto;
  height: 60px;
  display: flex;
  align-items: center;
}
.cell {
  position: relative;
  width: 60px;
  height: 60px;
  padding-top: 10px;
}
.cell.dots {
  width: 50px;
}
.split {
  width: 2px;
  height: 24px;
  margin: 34px 15px 0 14px;
  background: linear-gradient(#dde0e6, #8fa9d4);
}
.badge {
  position: absolute;
  left: 30px;
  top: 16px;
  width: 30px;
  height: 15px;
  color: #fff;
  font: 500 13px/15px Roboto, sans-serif;
  text-align: center;
}
.red {
  background: #cf3a32;
}
.blue {
  background: #2f7df0;
}
.user {
  width: 130px;
  height: 60px;
  padding: 14px 0 0 15px;
  justify-content: flex-start;
  color: #fff;
  font-weight: 700;
  font-size: 14px;
}
.user span {
  margin: -8px 5px 0 2px;
}
.tri {
  margin-top: -5px;
}
.cloud {
  width: 71px;
  height: 60px;
  padding: 10px 0 0 1px;
}
.titlebar {
  height: 22px;
  flex: none;
  display: flex;
  align-items: center;
  padding: 0 8px 2px 12px;
  font-size: 11px;
  font-weight: 500;
  background: linear-gradient(#f7f7f7, #fff 40%);
}
.ghost {
  margin-left: 2px;
  color: #e3e3e3;
}
.title-btns {
  margin: 2px 0 0 auto;
  display: flex;
  align-items: center;
}
.title-btns button {
  width: 24px;
  height: 18px;
}
.title-btns button:last-child {
  width: 16px;
  margin-left: 4px;
}
.rainbow {
  height: 8px;
  flex: none;
  background: linear-gradient(90deg, #ef8a34, #f5b043 37%, #f9cf4e 66%, #fff35f);
}
.brand {
  height: 44px;
  flex: none;
  display: flex;
  align-items: center;
  padding: 0 40px 0 38px;
}
.brand h1 {
  margin: 0 0 0 9px;
  font-size: 24px;
  line-height: 32px;
  font-weight: 300;
  color: #f08b2d;
}
.brand h1 b {
  font-weight: 700;
}
.search {
  width: 351px;
  height: 25px;
  margin-left: auto;
  padding-left: 9px;
  display: flex;
  align-items: center;
  border: 1px solid #b5b5b5;
}
.search input {
  flex: 1;
  min-width: 0;
  margin-left: 9px;
  padding: 1px 2px 0;
  border: 0;
  outline: 0;
  background: none;
  font: 11px/20px Roboto, "Noto Sans CJK SC", sans-serif;
}
.search input::placeholder {
  color: #777;
}
.search button {
  width: 26px;
  height: 17px;
  border-left: 1px solid #b5b5b5;
}
.h1b {
  width: 18px;
  margin-left: 29px;
}
.h2b {
  width: 22px;
  margin-left: 19px;
}
.h3b {
  width: 18px;
  margin-left: 14px;
}
.h4b {
  width: 4px;
  margin-left: 24px;
}
.body {
  flex: 1;
  min-height: 0;
  display: flex;
}
.side {
  width: 238px;
  flex: none;
  background: #434343;
  color: #f4f4f4;
}
.side ul {
  margin: 0;
  padding: 28px 0 0;
  list-style: none;
}
.side li {
  position: relative;
  height: 25px;
  display: flex;
  align-items: center;
  padding-left: 16px;
  font-size: 13px;
  line-height: 20px;
  white-space: nowrap;
}
.side li.l1 {
  padding-left: 44px;
}
.side li.l2 {
  padding-left: 60px;
}
.side li.gap {
  margin-top: 5px;
}
.side a {
  color: inherit;
  text-decoration: none;
  margin: 0 0 4px 4px;
  font-weight: 700;
}
.l1 a,
.l2 a {
  font-weight: 500;
}
.side .han a {
  margin-bottom: 6px;
  font-weight: 700;
}
.ico {
  width: 16px;
  height: 16px;
  margin-bottom: 3px;
}
.deep .ico {
  width: 20px;
  height: 20px;
  margin-bottom: 2px;
}
.side li.active {
  background: #343434;
  color: #f0a030;
  border-left: 3px solid #f5a93f;
  padding-left: 13px;
}
.guide {
  position: absolute;
  left: 38px;
  top: 0;
  bottom: 0;
  width: 1px;
  background: #5c5c5c;
}
.guide.two {
  left: 54px;
}
.tw {
  position: absolute;
  left: 36px;
  top: 9px;
}
.l2 .tw {
  left: 53px;
}
.lock {
  margin: 0 0 6px 4px;
}
.panel {
  position: relative;
  flex: 1;
  min-width: 0;
  margin-left: 1px;
  display: flex;
  flex-direction: column;
  border-left: 1px solid #8fb0c4;
}
.tools {
  height: 41px;
  flex: none;
  display: flex;
  border-top: 1px solid #d2d2d2;
  border-bottom: 1px solid #cfcfcf;
  background: #f4f4f4;
}
.grp {
  position: relative;
  display: flex;
  align-items: center;
}
.grp::after {
  content: "";
  position: absolute;
  right: 0;
  bottom: 0;
  width: 1px;
  height: 15px;
  background: #c6c6c6;
}
.t1 {
  width: 57px;
  padding-left: 18px;
}
.t2 {
  width: 141px;
  padding-left: 9px;
}
.t3 {
  width: 51px;
  padding-left: 11px;
}
.t4 {
  width: 51px;
  padding-left: 10px;
}
.dn {
  margin-left: 11px;
  border: 3px solid transparent;
  border-top-color: #111;
  border-bottom: 0;
}
.t2 .dn,
.t3 .dn,
.t4 .dn {
  margin-left: 10px;
}
.copy {
  margin-left: 14px;
}
.up {
  margin-left: 20px;
}
.crumb {
  height: 30px;
  flex: none;
  display: flex;
  align-items: center;
  padding: 0 12px 0 19px;
  color: #a6a6a6;
  font-size: 12px;
}
.cb.dim {
  margin-left: 6px;
}
.cb.back {
  margin: 0 14px;
}
.heart {
  margin: 2px 0 0 auto;
}
.grid {
  flex: 1;
  min-height: 0;
  overflow: hidden;
}
table {
  width: 100%;
  table-layout: fixed;
  border-spacing: 0;
  font-size: 12px;
  line-height: 18px;
}
.c1 {
  width: 42px;
}
.c2 {
  width: 33px;
}
.c4 {
  width: 205px;
}
.c5 {
  width: 116px;
}
.c6 {
  width: 105px;
}
.c7 {
  width: 23px;
}
th {
  height: 30px;
  padding: 0;
  border-top: 1px solid #e6e6e6;
  background: #f3f3f3;
  font-size: 11px;
  font-weight: 500;
  text-align: left;
}
td {
  height: 30px;
  padding: 0 0 2px;
  border-bottom: 1px solid #fdfdfd;
  background: #fdfdfd;
  white-space: nowrap;
}
tbody tr:nth-child(even) td {
  background: #f3f3f3;
}
tbody tr.sel td {
  background: #f7d0a3;
}
.chk {
  padding: 0 0 0 15px;
}
input[type="checkbox"] {
  appearance: none;
  display: block;
  width: 12px;
  height: 12px;
  margin: 1px 0 0;
  border: 1px solid #333;
  background: #fff;
}
input[type="checkbox"]:checked::after {
  content: "";
  display: block;
  width: 4px;
  height: 8px;
  margin: -1px 0 0 3px;
  border: solid #111;
  border-width: 0 1px 1px 0;
  transform: rotate(40deg);
}
.fi svg {
  margin: 0 0 1px 10px;
}
.fi .dir-ico {
  margin-left: 8px;
}
.sep {
  background: linear-gradient(#ccc, #f3f3f3) right top / 1px 20px no-repeat #f3f3f3;
}
.name {
  padding-left: 13px;
}
.pad {
  padding-left: 13px;
}
th.name,
th.pad {
  padding-left: 14px;
}
th svg {
  display: inline-block;
  margin-left: 4px;
  vertical-align: 1px;
}
td.num {
  text-align: right;
  padding-right: 13px;
}
th.num {
  text-align: right;
  padding-right: 15px;
}
.plus button {
  margin-left: 9px;
  font-weight: 900;
  font-size: 12px;
  color: #111;
}
.pager {
  height: 35px;
  flex: none;
  display: flex;
  align-items: center;
  padding: 2px 8px 0 8px;
  border-top: 1px solid #858585;
  background: #fafafa;
  font-size: 11px;
  font-weight: 500;
  white-space: nowrap;
}
.pager label,
.pager span {
  padding-bottom: 2px;
}
.p2 {
  margin-left: 11px;
}
.ps {
  width: 1px;
  height: 13px;
  margin: 0 12px 0 18px;
  background: #a3a08f;
}
.pager input {
  width: 52px;
  height: 26px;
  padding: 0 10px;
  border: 1px solid #ddd;
  background: #fff;
  color: #2f7fd0;
  font: 12px/20px Roboto, sans-serif;
}
.of {
  margin-left: 2px;
}
.s2 {
  margin: 0 18px 0 13px;
}
.p4 {
  margin-left: 13px;
}
.s3 {
  margin: 0 17px 0 16px;
}
.sum {
  margin-left: auto;
  display: flex;
  align-items: center;
}
.s4 {
  margin: 0 12px 0 13px;
}
.sel-wrap {
  position: relative;
}
.sel-wrap select {
  appearance: none;
  display: block;
  width: 60px;
  height: 26px;
  padding: 0 10px;
  border: 1px solid #b5b5b5;
  border-radius: 0;
  background: #fff;
  color: #222;
  font: 12px/20px Roboto, sans-serif;
}
.sel-wrap svg {
  position: absolute;
  right: 8px;
  top: 11px;
  pointer-events: none;
}
.unit {
  margin-left: 6px;
}
.menu {
  position: absolute;
  left: 221px;
  top: 120px;
  width: 186px;
  padding: 16px 0 22px;
  border: 1px solid #a9a9a9;
  background: #fff;
}
.menu button {
  position: relative;
  width: 100%;
  height: 28px;
  padding: 0 6px 4px 22px;
  justify-content: space-between;
  color: #222;
  font-size: 13px;
}
.menu svg {
  margin-top: 2px;
}
.menu button.line {
  margin-bottom: 2px;
}
.menu button.line::after {
  content: "";
  position: absolute;
  left: 0;
  right: 37px;
  top: 28px;
  height: 1px;
  background: #c6c6c6;
}
.menu button.hot {
  background: #e0fcfd;
}
.pointer {
  position: absolute;
  left: 376px;
  top: 538px;
}
.status {
  position: absolute;
  left: 0;
  bottom: 0;
  height: 21px;
  padding: 0 7px 0 5px;
  border-radius: 0 4px 0 0;
  background: #05072d;
  color: #fff;
  font: 12px/21px Roboto, sans-serif;
}
</style>
